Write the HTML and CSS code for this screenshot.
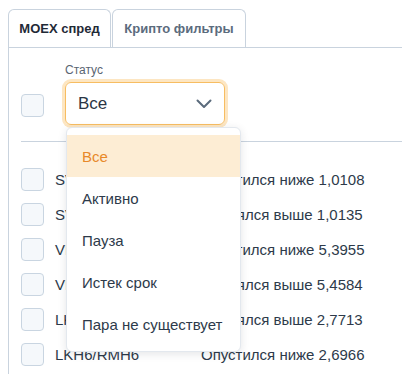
FILE: index.html
```html
<!DOCTYPE html>
<html lang="ru">
<head>
<meta charset="utf-8">
<link rel="stylesheet" href="styles.css">
</head>
<body>
<div class="tabs">
  <div class="tab active">MOEX спред</div>
  <div class="tab">Крипто фильтры</div>
</div>
<div class="panel">
  <div class="filters">
    <span class="cb head-cb"></span>
    <div class="field">
      <div class="label">Статус</div>
      <div class="select">
        <span>Все</span>
        <svg class="chev" width="16" height="10" viewBox="0 0 16 10"><path d="M1.5 1.5 L8 8 L14.5 1.5" fill="none" stroke="#5b6b7c" stroke-width="2" stroke-linecap="round" stroke-linejoin="round"/></svg>
      </div>
      <ul class="menu">
        <li class="item selected">Все</li>
        <li class="item">Активно</li>
        <li class="item">Пауза</li>
        <li class="item">Истек срок</li>
        <li class="item">Пара не существует</li>
      </ul>
    </div>
  </div>
  <div class="rows">
    <div class="row"><span class="cb"></span><span class="pair">SVH6/SVM6</span><span class="cond">Опустился ниже 1,0108</span></div>
    <div class="row"><span class="cb"></span><span class="pair">SVM6/SVU6</span><span class="cond">Поднялся выше 1,0135</span></div>
    <div class="row"><span class="cb"></span><span class="pair">VBH6/VBM6</span><span class="cond">Опустился ниже 5,3955</span></div>
    <div class="row"><span class="cb"></span><span class="pair">VBM6/VBU6</span><span class="cond">Поднялся выше 5,4584</span></div>
    <div class="row"><span class="cb"></span><span class="pair">LKM6/RMM6</span><span class="cond">Поднялся выше 2,7713</span></div>
    <div class="row"><span class="cb"></span><span class="pair">LKH6/RMH6</span><span class="cond">Опустился ниже 2,6966</span></div>
  </div>
</div>
</body>
</html>
```

FILE: styles.css
```css
* { box-sizing: border-box; }
html, body { margin: 0; padding: 0; background: #fff; }
body {
  font-family: "Liberation Sans", Arial, sans-serif;
  color: #2d3a4a;
  overflow: hidden;
  height: 374px;
}
.tabs {
  display: flex;
  gap: 1px;
  padding: 9px 0 0 8px;
}
.tab {
  height: 38px;
  border: 1px solid #c9d3de;
  border-bottom: none;
  border-radius: 6px 6px 0 0;
  font-size: 13px;
  font-weight: bold;
  color: #5b6b7d;
  display: flex;
  align-items: center;
  justify-content: center;
  white-space: nowrap;
  padding: 0;
}
.tab.active { color: #1f2a37; width: 103px; }
.tab:not(.active) { width: 134px; }
.panel {
  border-top: 1px solid #c9d3de;
  border-left: 1px solid #c9d3de;
  margin-left: 8px;
  padding-left: 12px;
  height: 330px;
}
.filters {
  display: flex;
  align-items: flex-end;
  gap: 21px;
  padding-top: 15px;
  padding-bottom: 16px;
  border-bottom: 1px solid #c9d3de;
}
.cb {
  display: block;
  flex: none;
  width: 23px;
  height: 23px;
  border: 1px solid #c9d5e1;
  border-radius: 4px;
  background: #f5f8fb;
}
.head-cb { margin-bottom: 8px; }
.field { position: relative; }
.label {
  font-size: 12px;
  line-height: 14px;
  color: #5a6572;
  margin-bottom: 5px;
}
.select {
  width: 160px;
  height: 43px;
  border: 1px solid #f7bd62;
  border-radius: 6px;
  box-shadow: 0 0 0 3px #fde6c2;
  display: flex;
  align-items: center;
  justify-content: space-between;
  padding: 0 12px 0 12px;
  font-size: 17px;
  color: #2b3544;
}
.chev { margin-top: 1px; }
.menu {
  position: absolute;
  left: 1px;
  top: 64px;
  width: 175px;
  margin: 0;
  padding: 7px 0 6px;
  list-style: none;
  background: #fff;
  border: 1px solid #e3e8ee;
  border-radius: 6px;
  box-shadow: 0 2px 8px rgba(30, 45, 60, 0.12);
  z-index: 2;
}
.item {
  height: 42px;
  display: flex;
  align-items: center;
  padding-left: 15px;
  font-size: 15px;
  color: #2d3a4a;
}
.item.selected { background: #fdedd4; color: #e8892a; }
.rows { padding-top: 20px; }
.row {
  height: 35px;
  display: flex;
  align-items: center;
  font-size: 15px;
  color: #2d3a4a;
}
.pair { width: 146px; margin-left: 11px; }
.cond { white-space: nowrap; }
```
